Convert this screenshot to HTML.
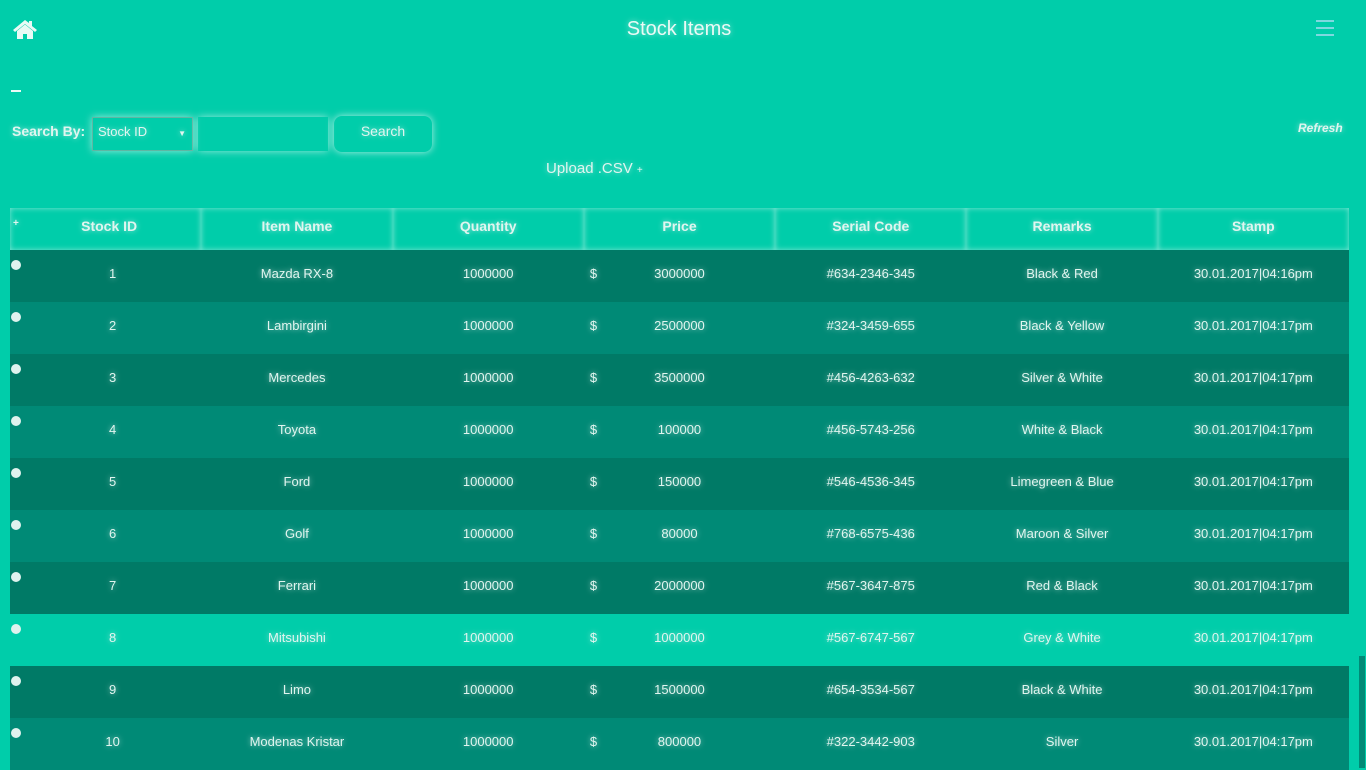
<!DOCTYPE html>
<html><head><meta charset="utf-8"><style>
*{margin:0;padding:0;box-sizing:border-box}
body{width:1366px;height:768px;overflow:hidden;background:#00cdaa;font-family:"Liberation Sans",sans-serif;color:#e0f5ef;position:relative}
.glow{text-shadow:0 0 6px rgba(255,255,255,.6)}
.title{position:absolute;left:0;width:1358px;top:18px;text-align:center;font-size:20px;color:#eafaf5}
.home{position:absolute;left:12px;top:18px}
.menu{position:absolute;left:1316px;top:20px;width:18px}
.menu i{display:block;height:2px;background:#7fd8e0;margin-bottom:5px}
.dash{position:absolute;left:11px;top:90px;width:10px;height:2px;background:#eafaf5}
.sb{position:absolute;left:12px;top:123px;font-size:14px;font-weight:bold}
.sel{position:absolute;left:92px;top:117px;width:101px;height:34px;border:1px solid #5fb7a3;box-shadow:0 0 8px rgba(255,255,255,.6);font-size:13px;padding:6px 5px}
.sel span{position:absolute;right:6px;top:11px;font-size:8px}
.inp{position:absolute;left:198px;top:117px;width:130px;height:34px;box-shadow:0 0 8px rgba(255,255,255,.6)}
.btn{position:absolute;left:334px;top:116px;width:98px;height:36px;border-radius:8px;box-shadow:0 0 8px rgba(255,255,255,.7);font-size:14px;text-align:center;line-height:30px}
.ref{position:absolute;left:1298px;top:121px;font-size:12px;font-weight:bold;font-style:italic}
.up{position:absolute;left:546px;top:160px;font-size:15px}
table{position:absolute;left:10px;top:208px;width:1339px;border-collapse:collapse;table-layout:fixed}
th{height:42px;font-size:14px;font-weight:bold;background:#00cdaa;box-shadow:inset 0 0 6px rgba(255,255,255,.5);position:relative;padding-bottom:6px}
th:first-child{padding-left:7px}
td{height:52px;font-size:13px;text-align:center;position:relative;padding-bottom:6px}
td:first-child{padding-left:14px}
tr.d td{background:#007a66}
tr.m td{background:#008a76}
tr.h td{background:#00cdaa}
.dot{position:absolute;left:1px;top:10px;width:10px;height:10px;border-radius:50%;background:#dff2ee}
.cur{position:absolute;left:6px;text-align:left}
.sc{position:absolute;right:1px;top:656px;width:6px;height:112px;background:#008a76}
</style></head><body>
<div class="home"><svg width="26" height="22" viewBox="0 0 26 22"><path d="M13 2L1 12l2 2 10-8 10 8 2-2-5-4V3h-3v2z" fill="#eafaf5"/><path d="M5 13l8-6.5 8 6.5v8h-6v-5h-4v5H5z" fill="#eafaf5"/></svg></div>
<div class="title glow">Stock Items</div>
<div class="menu"><i></i><i></i><i></i></div>
<div class="dash"></div>
<div class="sb glow">Search By:</div>
<div class="sel glow">Stock ID<span>▼</span></div>
<div class="inp"></div>
<div class="btn glow">Search</div>
<div class="ref glow">Refresh</div>
<div class="up glow">Upload .CSV <span style="font-size:10px">+</span></div>
<table class="glow">
<tr><th><span style="position:absolute;left:3px;top:10px;font-size:10px">+</span>Stock ID</th><th>Item Name</th><th>Quantity</th><th>Price</th><th>Serial Code</th><th>Remarks</th><th>Stamp</th></tr>
<tr class="d"><td><div class="dot"></div>1</td><td>Mazda RX-8</td><td>1000000</td><td><span class="cur">$</span>3000000</td><td>#634-2346-345</td><td>Black &amp; Red</td><td>30.01.2017|04:16pm</td></tr>
<tr class="m"><td><div class="dot"></div>2</td><td>Lambirgini</td><td>1000000</td><td><span class="cur">$</span>2500000</td><td>#324-3459-655</td><td>Black &amp; Yellow</td><td>30.01.2017|04:17pm</td></tr>
<tr class="d"><td><div class="dot"></div>3</td><td>Mercedes</td><td>1000000</td><td><span class="cur">$</span>3500000</td><td>#456-4263-632</td><td>Silver &amp; White</td><td>30.01.2017|04:17pm</td></tr>
<tr class="m"><td><div class="dot"></div>4</td><td>Toyota</td><td>1000000</td><td><span class="cur">$</span>100000</td><td>#456-5743-256</td><td>White &amp; Black</td><td>30.01.2017|04:17pm</td></tr>
<tr class="d"><td><div class="dot"></div>5</td><td>Ford</td><td>1000000</td><td><span class="cur">$</span>150000</td><td>#546-4536-345</td><td>Limegreen &amp; Blue</td><td>30.01.2017|04:17pm</td></tr>
<tr class="m"><td><div class="dot"></div>6</td><td>Golf</td><td>1000000</td><td><span class="cur">$</span>80000</td><td>#768-6575-436</td><td>Maroon &amp; Silver</td><td>30.01.2017|04:17pm</td></tr>
<tr class="d"><td><div class="dot"></div>7</td><td>Ferrari</td><td>1000000</td><td><span class="cur">$</span>2000000</td><td>#567-3647-875</td><td>Red &amp; Black</td><td>30.01.2017|04:17pm</td></tr>
<tr class="h"><td><div class="dot"></div>8</td><td>Mitsubishi</td><td>1000000</td><td><span class="cur">$</span>1000000</td><td>#567-6747-567</td><td>Grey &amp; White</td><td>30.01.2017|04:17pm</td></tr>
<tr class="d"><td><div class="dot"></div>9</td><td>Limo</td><td>1000000</td><td><span class="cur">$</span>1500000</td><td>#654-3534-567</td><td>Black &amp; White</td><td>30.01.2017|04:17pm</td></tr>
<tr class="m"><td><div class="dot"></div>10</td><td>Modenas Kristar</td><td>1000000</td><td><span class="cur">$</span>800000</td><td>#322-3442-903</td><td>Silver</td><td>30.01.2017|04:17pm</td></tr>
</table>
<div class="sc"></div>
</body></html>
